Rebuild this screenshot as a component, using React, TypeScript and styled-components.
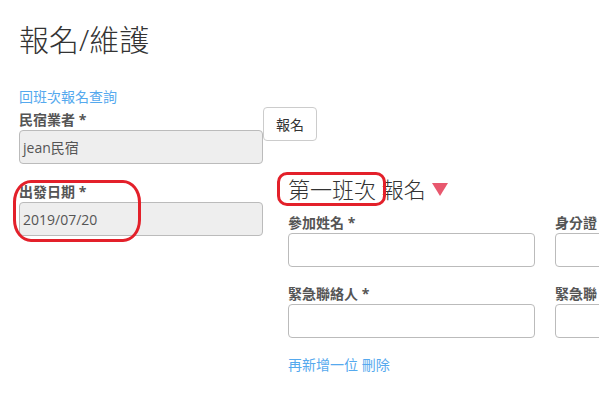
import styled, { createGlobalStyle } from 'styled-components';

const GlobalStyle = createGlobalStyle`
  body {
    margin: 0;
    background: #fff;
    font-family: "Open Sans", "Noto Sans CJK TC", sans-serif;
    overflow: hidden;
  }
`;

const Page = styled.div`
  position: relative;
  width: 599px;
  height: 399px;
  padding: 22px 0 0 19px;
  box-sizing: border-box;
  overflow: hidden;
`;

const Title = styled.h1`
  margin: 0;
  font-size: 30px;
  line-height: 36px;
  font-weight: 300;
  color: #333;
`;

const Main = styled.div`
  display: flex;
  margin-top: 30px;
`;

const LeftCol = styled.div`
  width: 244px;
  flex: none;
  display: flex;
  flex-direction: column;
`;

const RightCol = styled.div`
  display: flex;
  flex-direction: column;
  align-items: flex-start;
`;

const TextLink = styled.a`
  display: block;
  font-size: 14px;
  line-height: 18px;
  color: #55a9ee;
  text-decoration: none;
`;

const Label = styled.label<{ $gap?: number }>`
  display: block;
  margin-top: ${(p) => p.$gap ?? 0}px;
  margin-bottom: 1px;
  font-size: 14px;
  line-height: 18px;
  font-weight: 700;
  color: #555;
  white-space: nowrap;
`;

const Input = styled.div<{ $readOnly?: boolean }>`
  height: 34px;
  box-sizing: border-box;
  display: flex;
  align-items: center;
  padding: 0 3px;
  border: 1px solid #bbb;
  border-radius: 4px;
  background: ${(p) => (p.$readOnly ? '#eee' : '#fff')};
  font-size: 14px;
  color: #555;
`;

const Button = styled.button`
  margin-top: 19px;
  width: 54px;
  height: 34px;
  border: 1px solid #ccc;
  border-radius: 4px;
  background: #fff;
  font-family: inherit;
  font-size: 14px;
  color: #333;
`;

const Section = styled.div`
  padding-left: 25px;
  margin-top: 34px;
`;

const Heading = styled.h3`
  margin: 0;
  display: flex;
  align-items: center;
  font-size: 22px;
  line-height: 28px;
  font-weight: 300;
  color: #333;
`;

const Caret = styled.span`
  margin-left: 6px;
  margin-top: 1px;
  width: 0;
  height: 0;
  border-left: 8px solid transparent;
  border-right: 8px solid transparent;
  border-top: 13px solid #e8586e;
`;

const FieldGrid = styled.div`
  display: grid;
  grid-template-columns: 247px 247px;
  column-gap: 20px;
  margin-top: 11px;
`;

const Field = styled.div<{ $gap?: number }>`
  margin-top: ${(p) => p.$gap ?? 0}px;
`;

const Actions = styled.div`
  margin-top: 18px;
`;

const Annotation = styled.div`
  position: absolute;
  border: 3px solid #e3202a;
  box-sizing: border-box;
`;

export default function App() {
  return (
    <>
      <GlobalStyle />
      <Page>
        <Title>報名/維護</Title>
        <Main>
          <LeftCol>
            <TextLink href="#">回班次報名查詢</TextLink>
            <Label $gap={5}>民宿業者 *</Label>
            <Input $readOnly>jean民宿</Input>
            <Label $gap={19}>出發日期 *</Label>
            <Input $readOnly>2019/07/20</Input>
          </LeftCol>
          <RightCol>
            <Button>報名</Button>
            <Section>
              <Heading>
                第一班次 報名<Caret />
              </Heading>
              <FieldGrid>
                <Field>
                  <Label>參加姓名 *</Label>
                  <Input />
                </Field>
                <Field>
                  <Label>身分證</Label>
                  <Input />
                </Field>
                <Field $gap={18}>
                  <Label>緊急聯絡人 *</Label>
                  <Input />
                </Field>
                <Field $gap={18}>
                  <Label>緊急聯</Label>
                  <Input />
                </Field>
              </FieldGrid>
              <Actions>
                <TextLink href="#">再新增一位 刪除</TextLink>
              </Actions>
            </Section>
          </RightCol>
        </Main>
        <Annotation style={{ left: 13, top: 180, width: 128, height: 62, borderRadius: '18px / 22px' }} />
        <Annotation style={{ left: 277, top: 172, width: 109, height: 34, borderRadius: 10 }} />
      </Page>
    </>
  );
}
